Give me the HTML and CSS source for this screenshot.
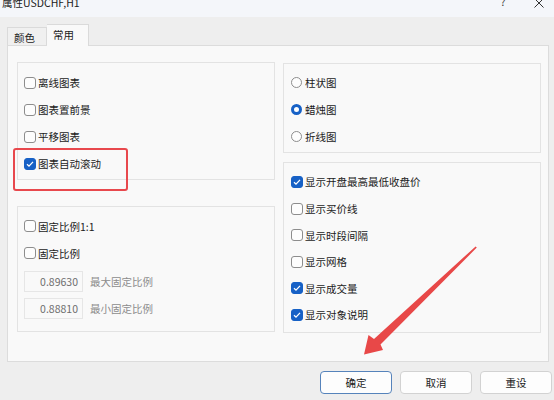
FILE: index.html
```html
<!DOCTYPE html>
<html lang="zh-CN">
<head>
<meta charset="utf-8">
<title>属性USDCHF,H1</title>
<link rel="stylesheet" href="styles.css">
</head>
<body>
<div class="dialog">
  <div class="titlebar">
    <span class="title">属性USDCHF,H1</span>
    <span class="help">?</span>
    <span class="close"><svg width="10" height="10" viewBox="0 0 10 10"><path d="M0.5 0.5 L9.5 9.5 M9.5 0.5 L0.5 9.5" stroke="#333" stroke-width="1" fill="none"/></svg></span>
  </div>
  <div class="tabs">
    <div class="tab">颜色</div>
    <div class="tab active">常用</div>
  </div>
  <div class="panel">
    <div class="col">
      <div class="group g-chart">
        <label class="row"><span class="cb"></span><span>离线图表</span></label>
        <label class="row"><span class="cb"></span><span>图表置前景</span></label>
        <label class="row"><span class="cb"></span><span>平移图表</span></label>
        <label class="row"><span class="cb on"><svg width="12" height="12" viewBox="0 0 12 12"><path d="M3 6.2 L5 8.1 L9 3.9" stroke="#fff" stroke-width="1.3" fill="none"/></svg></span><span>图表自动滚动</span></label>
      </div>
      <div class="group g-scale">
        <label class="row"><span class="cb"></span><span>固定比例1:1</span></label>
        <label class="row"><span class="cb"></span><span>固定比例</span></label>
        <div class="field first"><span class="num">0.89630</span><span class="hint">最大固定比例</span></div>
        <div class="field"><span class="num">0.88810</span><span class="hint">最小固定比例</span></div>
      </div>
    </div>
    <div class="col">
      <div class="group g-type">
        <label class="row"><span class="rb"></span><span>柱状图</span></label>
        <label class="row"><span class="rb on"></span><span>蜡烛图</span></label>
        <label class="row"><span class="rb"></span><span>折线图</span></label>
      </div>
      <div class="group g-show">
        <label class="row"><span class="cb on"><svg width="12" height="12" viewBox="0 0 12 12"><path d="M3 6.2 L5 8.1 L9 3.9" stroke="#fff" stroke-width="1.3" fill="none"/></svg></span><span>显示开盘最高最低收盘价</span></label>
        <label class="row"><span class="cb"></span><span>显示买价线</span></label>
        <label class="row"><span class="cb"></span><span>显示时段间隔</span></label>
        <label class="row"><span class="cb"></span><span>显示网格</span></label>
        <label class="row"><span class="cb on"><svg width="12" height="12" viewBox="0 0 12 12"><path d="M3 6.2 L5 8.1 L9 3.9" stroke="#fff" stroke-width="1.3" fill="none"/></svg></span><span>显示成交量</span></label>
        <label class="row"><span class="cb on"><svg width="12" height="12" viewBox="0 0 12 12"><path d="M3 6.2 L5 8.1 L9 3.9" stroke="#fff" stroke-width="1.3" fill="none"/></svg></span><span>显示对象说明</span></label>
      </div>
    </div>
  </div>
  <div class="buttons">
    <button class="btn default">确定</button>
    <button class="btn">取消</button>
    <button class="btn">重设</button>
  </div>
  <div class="highlight"></div>
  <svg class="arrow" width="554" height="400" viewBox="0 0 554 400">
    <polygon points="475.6,246.4 476.8,247.6 380.5,344.5 383,350 364,354.5 368.5,335 374,339" fill="#e84848"/>
  </svg>
</div>
</body>
</html>
```
FILE: styles.css
```css
body {
  margin: 0;
  background: #eeeeee;
  font-family: "Noto Sans CJK SC", "Microsoft YaHei", sans-serif;
  font-size: 10.5px;
  color: #1b1b1b;
}

.dialog {
  position: relative;
  width: 554px;
  height: 400px;
  overflow: hidden;
}

.titlebar {
  height: 17px;
  background: #f4f6fa;
  display: flex;
  align-items: flex-start;
  overflow: hidden;
}

.title {
  margin: -4px 0 0 2px;
  line-height: 14px;
}

.help {
  margin: -5px 0 0 auto;
  width: 10px;
  text-align: center;
  line-height: 14px;
  color: #333;
}

.close {
  margin: -2px 10px 0 26px;
  display: flex;
}

.tabs {
  display: flex;
  align-items: flex-end;
  height: 21px;
  margin: 7px 0 0 7px;
  position: relative;
  z-index: 1;
}

.tab {
  box-sizing: border-box;
  width: 40px;
  height: 18px;
  padding: 1px 0 0 6px;
  line-height: 17px;
  border: 1px solid #dadada;
  border-bottom: none;
  background: #f0f0f0;
}

.tab.active {
  width: 42px;
  height: 22px;
  margin-bottom: -1px;
  padding-top: 0;
  line-height: 19px;
  background: #f9f9f9;
  border-left: none;
}

.panel {
  box-sizing: border-box;
  height: 317px;
  margin: 0 5px 0 7px;
  border: 1px solid #dcdcdc;
  background: #f9f9f9;
  display: grid;
  grid-template-columns: 258px 258px;
  column-gap: 8px;
  padding: 16px 0 0 9px;
  align-items: start;
}

.col {
  display: flex;
  flex-direction: column;
}

.group {
  box-sizing: border-box;
  border: 1px solid #e3e3e3;
  background: #f9f9f9;
  display: flex;
  flex-direction: column;
}

.g-chart {
  height: 118px;
  padding: 6px 0 0 6px;
  margin-bottom: 26px;
}

.g-scale {
  height: 126px;
  padding: 5.5px 0 0 6px;
}

.g-type {
  height: 90px;
  margin-top: 1px;
  padding: 5px 0 0 7px;
  margin-bottom: 9px;
}

.g-show {
  height: 171px;
  padding: 5.7px 0 0 7px;
}

.row {
  display: flex;
  align-items: center;
  gap: 2px;
  height: 27px;
}

.g-show .row {
  height: 26.6px;
}

.cb {
  box-sizing: border-box;
  width: 12px;
  height: 12px;
  border: 1px solid #8d8d8d;
  border-radius: 3px;
  background: #fdfdfd;
  display: flex;
  align-items: center;
  justify-content: center;
}

.cb.on {
  background: #1761c6;
  border-color: #1761c6;
}

.cb svg {
  flex: none;
}

.rb {
  box-sizing: border-box;
  width: 11px;
  height: 11px;
  border: 1px solid #8d8d8d;
  border-radius: 50%;
  background: #fdfdfd;
  margin-right: 1px;
}

.rb.on {
  border: 3.5px solid #1761c6;
  background: #ffffff;
}

.field {
  display: flex;
  align-items: center;
  height: 21px;
  margin-top: 6px;
}

.field.first {
  margin-top: 4.5px;
}

.num {
  box-sizing: border-box;
  width: 59px;
  height: 21px;
  line-height: 19px;
  border: 1px solid #e6e6e6;
  background: #f9f9f9;
  text-align: right;
  padding-right: 4px;
  color: #6e6e6e;
}

.hint {
  margin-left: 7px;
  color: #8c8c8c;
}

.buttons {
  display: flex;
  justify-content: flex-end;
  gap: 8px;
  margin: 9px 2px 0 0;
}

.btn {
  box-sizing: border-box;
  width: 72px;
  height: 23px;
  border: 1px solid #d2d2d2;
  border-radius: 4px;
  background: #fdfdfd;
  font-family: inherit;
  font-size: 10.5px;
  color: #1b1b1b;
  padding: 0;
}

.btn.default {
  border-color: #5683bb;
}

.highlight {
  position: absolute;
  left: 13px;
  top: 148px;
  width: 115px;
  height: 43px;
  box-sizing: border-box;
  border: 2.5px solid #e8484d;
  border-radius: 3px;
}

.arrow {
  position: absolute;
  left: 0;
  top: 0;
  pointer-events: none;
}
```
